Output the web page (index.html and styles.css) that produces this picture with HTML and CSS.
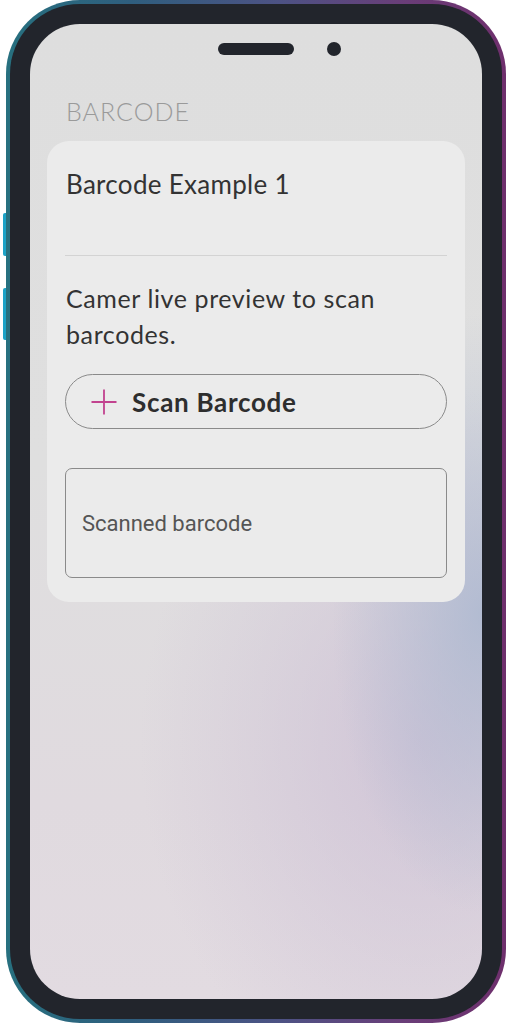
FILE: index.html
```html
<!DOCTYPE html>
<html lang="en">
<head>
<meta charset="utf-8">
<title>Barcode</title>
<link rel="stylesheet" href="styles.css">
</head>
<body>
<div class="device">
  <span class="side-btn side-btn-1"></span>
  <span class="side-btn side-btn-2"></span>
  <div class="phone">
    <div class="bezel">
      <div class="screen">
        <div class="notch">
          <span class="speaker"></span>
          <span class="camera"></span>
        </div>
        <h1 class="title">BARCODE</h1>
        <section class="card">
          <h2 class="card-title">Barcode Example 1</h2>
          <hr class="divider">
          <p class="desc">Camer live preview to scan barcodes.</p>
          <button class="scan-btn" type="button">
            <svg class="plus" width="26" height="26" viewBox="0 0 26 26" aria-hidden="true">
              <path d="M13 0.5V25.5M0.5 13H25.5" stroke="#c2438f" stroke-width="1.8" fill="none"/>
            </svg>
            <span>Scan Barcode</span>
          </button>
          <div class="field">Scanned barcode</div>
        </section>
      </div>
    </div>
  </div>
</div>
</body>
</html>
```
FILE: styles.css
```css
html, body {
  margin: 0;
  padding: 0;
  background: #ffffff;
}
body {
  width: 512px;
  height: 1024px;
  overflow: hidden;
}
.device {
  position: relative;
  width: 512px;
  height: 1024px;
  padding-left: 6px;
  box-sizing: border-box;
}
.side-btn {
  position: absolute;
  left: 3px;
  width: 5px;
  background: #1ba2c6;
  border-radius: 2px 0 0 2px;
}
.side-btn-1 { top: 213px; height: 43px; }
.side-btn-2 { top: 288px; height: 52px; }
.phone {
  position: relative;
  width: 500px;
  height: 1023px;
  border-radius: 74px;
  padding: 4px;
  box-sizing: border-box;
  background: linear-gradient(90deg, #27707f 0%, #2f5e7e 25%, #4d5284 55%, #6a3d78 80%, #6e2f6c 100%);
}
.bezel {
  width: 100%;
  height: 100%;
  background: #22252c;
  border-radius: 70px;
  padding: 20px;
  box-sizing: border-box;
}
.screen {
  position: relative;
  width: 452px;
  height: 975px;
  border-radius: 50px;
  overflow: hidden;
  box-sizing: border-box;
  padding: 0 17px;
  font-family: Lato, "Noto Sans", sans-serif;
  background:
    radial-gradient(ellipse 150px 300px at 100% 590px, rgba(172,184,208,0.85), rgba(172,184,208,0) 100%),
    radial-gradient(ellipse 280px 360px at 390px 720px, rgba(202,188,212,0.7), rgba(202,188,212,0) 100%),
    linear-gradient(180deg, #dedede 0%, #dfdfdf 45%, #e0dadf 80%, #e2dbe1 100%);
}
.notch {
  position: absolute;
  top: 18px;
  left: 188px;
  display: flex;
  align-items: center;
  gap: 33px;
}
.speaker {
  width: 76px;
  height: 12px;
  border-radius: 6px;
  background: #22252c;
}
.camera {
  width: 14px;
  height: 14px;
  border-radius: 50%;
  background: #22252c;
}
.title {
  margin: 0;
  padding: 72px 0 0 19px;
  height: 45px;
  font-size: 25px;
  line-height: 30px;
  font-weight: 300;
  color: #9a9a9a;
  letter-spacing: 1px;
}
.card {
  margin-top: 0;
  background: #ebebeb;
  border-radius: 22px;
  padding: 26px 18px 24px 18px;
  height: 461px;
  box-sizing: border-box;
}
.card-title {
  margin: 0 0 0 1px;
  font-size: 26px;
  line-height: 34px;
  font-weight: 400;
  letter-spacing: 0.3px;
  color: #333333;
}
.divider {
  margin: 54px 0 0 0;
  border: none;
  height: 1px;
  background: #d3d3d3;
}
.desc {
  margin: 24px 0 0 1px;
  font-size: 25px;
  line-height: 36px;
  letter-spacing: 0.6px;
  color: #333333;
}
.scan-btn {
  margin-top: 22px;
  width: 382px;
  height: 55px;
  border: 1px solid #8a8a8a;
  border-radius: 28px;
  background: transparent;
  display: flex;
  align-items: center;
  gap: 15px;
  padding: 0 0 0 25px;
  box-sizing: border-box;
  font-family: Lato, "Noto Sans", sans-serif;
  font-size: 26px;
  font-weight: 700;
  letter-spacing: 0.7px;
  color: #2e2e2e;
}
.plus {
  flex: none;
}
.field {
  margin-top: 39px;
  width: 382px;
  height: 110px;
  border: 1px solid #8a8a8a;
  border-radius: 7px;
  box-sizing: border-box;
  display: flex;
  align-items: center;
  padding: 0 0 0 16px;
  font-family: Roboto, sans-serif;
  font-size: 22px;
  color: #555555;
}
```
